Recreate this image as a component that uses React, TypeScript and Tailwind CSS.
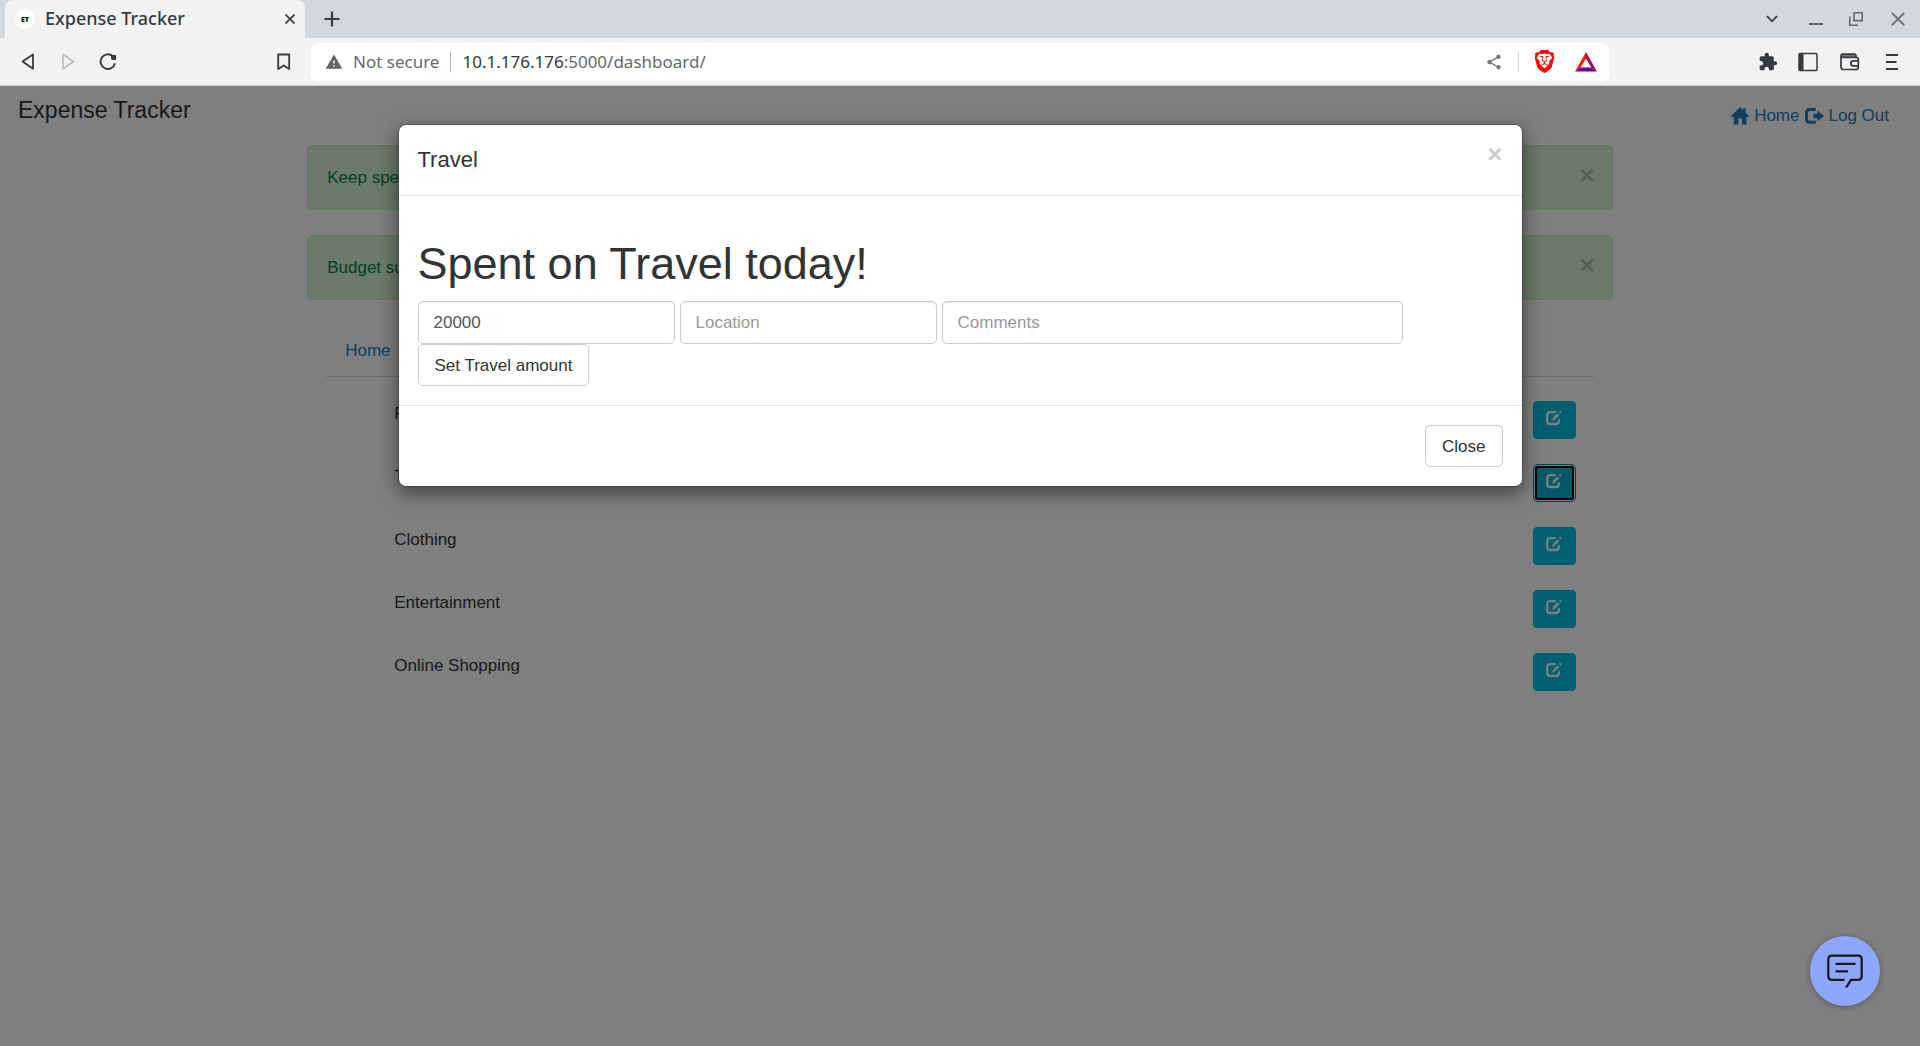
import React from "react";
import { MdExtension, MdShare, MdWarning } from "react-icons/md";
import { SiBrave } from "react-icons/si";

const categories = ["Food", "Travel", "Clothing", "Entertainment", "Online Shopping"];
const alerts = ["Keep spe", "Budget su"];

function HomeIcon() {
  return (
    <svg viewBox="0 0 18 18" className="h-[18px] w-[18px] fill-current" aria-hidden="true">
      <path d="M9 0 L12.2 3.1 V1.2 H14.6 V5.5 L18 9.2 V10 H15.4 V17.6 H11 V11.5 H7.4 V17.6 H2.8 V10 H0 V9.2 Z" />
    </svg>
  );
}

function LogOutIcon() {
  return (
    <svg viewBox="0 0 19 18" className="h-[18px] w-[19px]" aria-hidden="true">
      <path d="M10.8 2.4 H4.8 Q1.5 2.4 1.5 5.4 V12.2 Q1.5 15.2 4.8 15.2 H10.8" fill="none" stroke="currentColor" strokeWidth="3" />
      <path d="M8.5 6.7 H12.5 V3.6 L19 9 L12.5 14.2 V11.2 H8.5 Z" fill="currentColor" />
    </svg>
  );
}

function EditIcon() {
  return (
    <svg viewBox="0 0 17 16" className="ml-px h-4 w-[17px]" aria-hidden="true">
      <path d="M9.8 2.2 H4.3 Q1.2 2.2 1.2 5 V11.2 Q1.2 14 4.3 14 H9.8 Q12.8 14 12.8 11.2 V9.2" fill="none" stroke="currentColor" strokeWidth="2.3" />
      <path d="M11.5 3.2 L13.4 5.1 L8.7 9.8 L6 10.8 L6.8 7.9 Z" fill="currentColor" />
      <path d="M12.9 2 L13.7 1.1 Q14.3 0.6 15 1.3 Q15.9 2.2 15.3 2.8 L14.6 3.6 Z" fill="currentColor" />
    </svg>
  );
}

function IconButton({ label, className = "", children }: { label: string; className?: string; children: React.ReactNode }) {
  return (
    <button type="button" aria-label={label} className={"flex h-6 shrink-0 items-center justify-center " + className}>
      {children}
    </button>
  );
}

function TabStrip() {
  return (
    <div className="flex h-[38px] items-stretch bg-[#d3d8dc] pl-[5px] pr-[13px] text-[#363a3f]">
      <div className="flex w-[300px] items-center rounded-t-lg bg-[#f2f2f2] pl-[10px] pr-[7px]">
        <span className="flex h-5 w-5 items-center justify-center rounded-full bg-white text-[7px] font-black leading-none text-black">ET</span>
        <span className="ml-[10px] flex-1 pb-[2px] text-[18px] font-medium leading-6">Expense Tracker</span>
        <IconButton label="Close tab" className="w-4">
          <svg viewBox="0 0 10 10" className="h-[10px] w-[10px]" fill="none" stroke="currentColor" strokeWidth="1.7"><path d="M0.5 0.5 L9.5 9.5 M9.5 0.5 L0.5 9.5" /></svg>
        </IconButton>
      </div>
      <div className="flex flex-1 items-center pl-[18px]">
        <IconButton label="New tab" className="w-[18px]">
          <svg viewBox="0 0 16 16" className="h-4 w-4" fill="none" stroke="currentColor" strokeWidth="2.2"><path d="M8 0.5 V15.5 M0.5 8 H15.5" /></svg>
        </IconButton>
      </div>
      <div className="flex items-center gap-6 text-[#666a6e]">
        <IconButton label="Search tabs" className="w-4 text-[#363a3f]">
          <svg viewBox="0 0 12 8" className="h-2 w-3" fill="none" stroke="currentColor" strokeWidth="1.8"><path d="M1 1.2 L6 6.3 L11 1.2" /></svg>
        </IconButton>
        <IconButton label="Minimize" className="ml-[5px] w-[14px]">
          <svg viewBox="0 0 14 14" className="h-[14px] w-[14px]" fill="none" stroke="currentColor" strokeWidth="2"><path d="M0 12 H14" /></svg>
        </IconButton>
        <IconButton label="Restore" className="w-[18px]">
          <svg viewBox="0 0 14 14" className="h-[14px] w-[14px]" fill="none" stroke="currentColor" strokeWidth="1.6"><path d="M5 0.8 H13.2 V8.6 H5 Z M0.8 4.5 V13.2 H9" /></svg>
        </IconButton>
        <IconButton label="Close window" className="w-[18px]">
          <svg viewBox="0 0 14 14" className="h-[14px] w-[14px]" fill="none" stroke="currentColor" strokeWidth="1.8"><path d="M0.8 0.8 L13.2 13.2 M13.2 0.8 L0.8 13.2" /></svg>
        </IconButton>
      </div>
    </div>
  );
}

function Toolbar() {
  return (
    <div className="flex h-12 items-center border-b border-[#d0d3d5] bg-[#f2f2f2] text-[#363a3f]">
      <div className="flex w-[311px] items-center pl-[18px]">
        <IconButton label="Back" className="w-5">
          <svg viewBox="0 0 14 18" className="h-[18px] w-[14px]" fill="none" stroke="currentColor" strokeWidth="1.8" strokeLinejoin="round"><path d="M12 1.5 V15.7 L1.5 8.6 Z" /></svg>
        </IconButton>
        <IconButton label="Forward" className="ml-5 w-5 text-[#bcbfc1]">
          <svg viewBox="0 0 14 18" className="h-[18px] w-[14px]" fill="none" stroke="currentColor" strokeWidth="1.8" strokeLinejoin="round"><path d="M2 1.5 V15.7 L12.5 8.6 Z" /></svg>
        </IconButton>
        <IconButton label="Reload" className="ml-5 w-5">
          <svg viewBox="0 0 18 18" className="h-[18px] w-[18px]" fill="none" stroke="currentColor" strokeWidth="1.9"><path d="M13.8 3.2 A7.3 7.3 0 1 0 16 10.2" /><path d="M12 2 H17 V6.8 L12.5 6 Z" fill="currentColor" stroke="none" /><circle cx="14.6" cy="4.4" r="2.6" fill="currentColor" stroke="none" /></svg>
        </IconButton>
        <IconButton label="Bookmark this page" className="ml-auto mr-[19px] w-4">
          <svg viewBox="0 0 14 18" className="h-[18px] w-[14px]" fill="none" stroke="currentColor" strokeWidth="1.8" strokeLinejoin="round"><path d="M1.2 1.5 H12.2 V16 L6.7 12.5 L1.2 16 Z" /></svg>
        </IconButton>
      </div>
      <div className="flex h-[38px] w-[1298px] min-w-0 shrink items-center rounded-md bg-white pl-[14px] pr-[11px] text-[17px] leading-6 text-[#66696d]">
        <MdWarning className="h-[18px] w-[18px] text-[#5f6368]" />
        <span className="ml-[10px]">Not secure</span>
        <span className="mx-[11px] h-5 w-px bg-[#b2b4b6]" />
        <span className="flex-1"><span className="text-[#33373b]">10.1.176.176</span>:5000/dashboard/</span>
        <IconButton label="Share" className="w-[18px] text-[#76797c]"><MdShare className="h-[18px] w-[18px]" /></IconButton>
        <span className="ml-[15px] mr-[13px] h-5 w-px bg-[#cfd1d3]" />
        <IconButton label="Brave Shields" className="w-6 text-[#fb0a05]"><SiBrave className="h-[23px] w-[23px]" /></IconButton>
        <IconButton label="Brave Rewards" className="ml-[18px] w-6">
          <svg viewBox="0 0 22 20" className="h-5 w-[22px]" aria-hidden="true">
            <path d="M11 0 V6.5 L5.7 15.6 L0 19.5 Z" fill="#ff1a05" />
            <path d="M11 0 L22 19.5 L16.3 15.6 L11 6.5 Z" fill="#a5095d" />
            <path d="M0 19.5 L5.7 15.6 H16.3 L22 19.5 Z" fill="#700096" />
          </svg>
        </IconButton>
      </div>
      <div className="ml-auto flex items-center gap-5 pr-4">
        <IconButton label="Extensions" className="w-5"><MdExtension className="h-5 w-5" /></IconButton>
        <IconButton label="Sidebar" className="w-5">
          <svg viewBox="0 0 20 20" className="h-5 w-5"><rect x="1" y="1.5" width="18" height="17" rx="1" fill="none" stroke="currentColor" strokeWidth="1.5" /><path d="M1 1.5 H5.5 V18.5 H1 Z" fill="currentColor" /></svg>
        </IconButton>
        <IconButton label="Wallet" className="ml-[2px] w-5">
          <svg viewBox="0 0 20 18" className="h-[18px] w-5" fill="none" stroke="currentColor" strokeWidth="1.7"><path d="M1 2 V14 Q1 16.5 3.5 16.5 H16 Q18.3 16.5 18.3 14.2 V6.5 Q18.3 4.3 16 4.3 H3 Q1 4.3 1 2.5 Q1 1.2 2.5 1.2 H14.5 Q16 1.2 16 2.8 V4.3" /><path d="M2 2 H15.5 V4 H2.5 Z" fill="currentColor" stroke="none" opacity="0.65" /><path d="M19 7.9 H13.4 Q10.8 7.9 10.8 10.3 Q10.8 12.8 13.4 12.8 H19" /></svg>
        </IconButton>
        <IconButton label="Menu" className="w-6">
          <svg viewBox="0 0 12 16" className="h-4 w-3" fill="none" stroke="currentColor" strokeWidth="1.8"><path d="M0 1 H12 M0 8 H10.5 M0 15 H12" /></svg>
        </IconButton>
      </div>
    </div>
  );
}

function Dashboard() {
  return (
    <div className="text-[17px] leading-[25px] text-[#333]">
      <header className="flex items-start justify-between pl-[18px] pr-[31px]">
        <h1 className="py-2 text-[23px] leading-8">Expense Tracker</h1>
        <nav className="flex gap-[5px] py-[17px] text-[#247cc4]">
          <a href="#home" className="flex items-center gap-[5px]"><HomeIcon />Home</a>
          <a href="#logout" className="flex items-center gap-[5px]"><LogOutIcon />Log Out</a>
        </nav>
      </header>
      <main className="mx-auto w-[68%]">
        {alerts.map((text) => (
          <div key={text} role="alert" className="mb-[25px] flex justify-between rounded-[5px] border border-[#ceedc4] bg-[#d8f4d8] py-[19px] pl-[19px] pr-[17px] text-[#00813f]">
            <span>{text}</span>
            <button type="button" aria-label="Dismiss" className="-mt-[3px] h-[26px] text-[26px] font-bold leading-[26px] text-black opacity-20">×</button>
          </div>
        ))}
        <div className="px-[19px]">
          <nav className="flex border-b border-[#ddd]">
            <a href="#tab-home" className="px-[19px] py-[13px] text-[#247cc4]">Home</a>
          </nav>
          <ul className="mt-6 flex flex-col gap-[25px] pl-[68px] pr-[18px]">
            {categories.map((name) => (
              <li key={name} className="flex justify-between">
                <span>{name}</span>
                <button
                  type="button"
                  aria-label={"Edit " + name}
                  className={
                    name === "Travel"
                      ? "flex h-[38px] w-[43px] items-start justify-center rounded-[5px] border border-[#008099] bg-[#00b0d0] pt-[8px] text-white shadow-[inset_0_0_0_1px_#fff,inset_0_0_0_3px_#000]"
                      : "flex h-[38px] w-[43px] items-start justify-center rounded border border-[#00badb] bg-[#00c1e0] pt-[8px] text-white"
                  }
                >
                  <EditIcon />
                </button>
              </li>
            ))}
          </ul>
        </div>
      </main>
    </div>
  );
}

const fieldClass =
  "h-[43px] rounded-[5px] border border-[#ccc] bg-white px-[15px] text-[#555] shadow-[inset_0_1px_1px_rgba(0,0,0,0.075)] outline-none placeholder:text-[#999]";
const buttonClass = "h-[42px] rounded-[5px] border border-[#ccc] bg-white px-4 text-[#333]";

function TravelDialog() {
  return (
    <div
      role="dialog"
      aria-modal="true"
      aria-labelledby="dialog-title"
      className="w-full max-w-[1125px] rounded-lg border border-black/20 bg-white bg-clip-padding text-[17px] leading-[25px] text-[#333] shadow-[0_6px_19px_rgba(0,0,0,0.5)]"
    >
      <div className="flex items-start justify-between border-b border-[#e5e5e5] p-[19px]">
        <h4 id="dialog-title" className="text-[22px] leading-8">Travel</h4>
        <button type="button" aria-label="Close dialog" className="-mt-[3px] text-[26px] font-bold leading-[26px] text-black opacity-20">×</button>
      </div>
      <form className="p-[19px]" onSubmit={(e) => e.preventDefault()}>
        <h1 className="mb-3 mt-6 text-[45px] leading-[50px]">Spent on Travel today!</h1>
        <div className="flex flex-wrap gap-x-[5px]">
          <input aria-label="Amount" defaultValue="20000" className={fieldClass + " w-[257px]"} />
          <input aria-label="Location" placeholder="Location" className={fieldClass + " w-[257px]"} />
          <input aria-label="Comments" placeholder="Comments" className={fieldClass + " w-[461px]"} />
          <button type="submit" className={buttonClass}>Set Travel amount</button>
        </div>
      </form>
      <div className="flex justify-end border-t border-[#e5e5e5] p-[19px]">
        <button type="button" className={buttonClass}>Close</button>
      </div>
    </div>
  );
}

export default function App() {
  return (
    <div className="flex min-h-screen flex-col bg-white font-['Liberation_Sans',Arial,sans-serif]">
      <div className="font-['Noto_Sans',sans-serif]">
        <TabStrip />
        <Toolbar />
      </div>
      <div className="relative flex-1">
        <Dashboard />
        <div className="absolute inset-0 flex items-start justify-center bg-black/50 pt-[38px]">
          <TravelDialog />
        </div>
        <button
          type="button"
          aria-label="Open chat"
          className="absolute bottom-10 right-10 flex h-[70px] w-[70px] items-center justify-center rounded-full bg-[#8fa6ff] text-[#16181d] shadow-[0_1px_6px_rgba(0,0,0,0.3)]"
        >
          <svg viewBox="0 0 36 34" className="h-[34px] w-9" fill="none" stroke="currentColor" strokeWidth="2.2" aria-hidden="true">
            <path d="M17.5 25.8 H4.8 Q1.3 25.8 1.3 22.3 V5.2 Q1.3 1.7 4.8 1.7 H31.2 Q34.7 1.7 34.7 5.2 V22.3 Q34.7 25.8 31.2 25.8 H24 L19.2 33.5" />
            <path d="M8.5 9.8 H28.5 M8.5 17.3 H21" />
          </svg>
        </button>
      </div>
    </div>
  );
}
